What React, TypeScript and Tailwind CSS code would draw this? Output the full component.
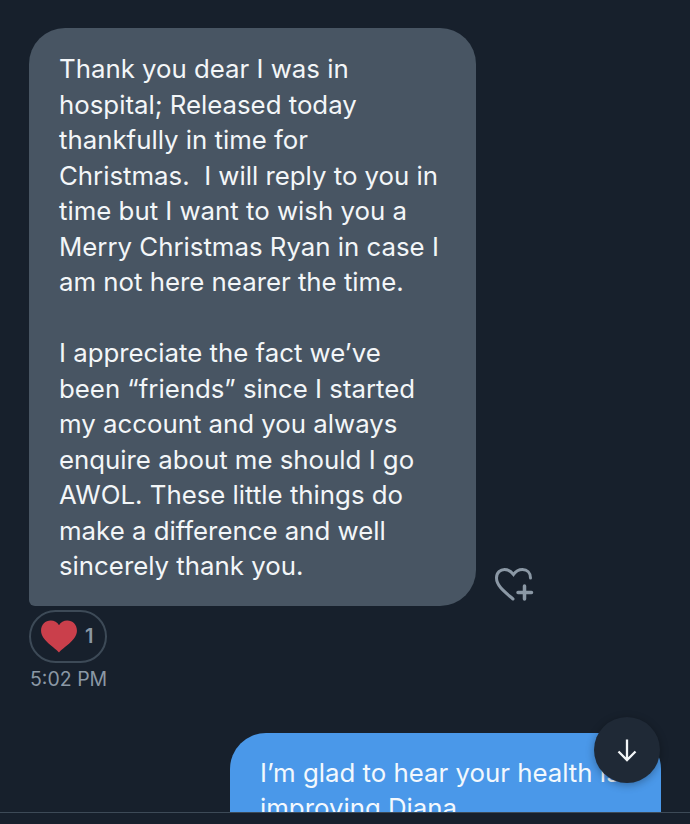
const lines = [
    'Thank you dear I was in',
    'hospital; Released today',
    'thankfully in time for',
    'Christmas.\u00a0 I will reply to you in',
    'time but I want to wish you a',
    'Merry Christmas Ryan in case I',
    'am not here nearer the time.',
    '\u00a0',
    'I appreciate the fact we’ve',
    'been “friends” since I started',
    'my account and you always',
    'enquire about me should I go',
    'AWOL. These little things do',
    'make a difference and well',
    'sincerely thank you.',
]

export default function App() {
    return (
        <div className="relative flex h-[824px] w-[690px] flex-col overflow-hidden bg-[#17202c] font-['Inter',sans-serif]">
            <div className="min-h-0 flex-1 overflow-hidden pt-7">
                {/* Incoming message */}
                <div className="flex items-end pl-[29px]">
                    <div className="w-[447px] rounded-[36px] rounded-bl-[6px] bg-[#485563] pl-[30px] pt-[23px] pb-[22px] text-[25.800px] leading-[35.5px] text-[#f3f6f8]">
                        {lines.map((line, i) => (
                            <div key={i} className="whitespace-nowrap">{line}</div>
                        ))}
                    </div>
                    <svg viewBox="0 0 40 36" className="mb-[4px] ml-[18px] h-[36px] w-[40px] fill-none stroke-[#8b98a5] stroke-[3px]">
                        <path d="M19 33 C11 26 2.500 20 2.500 12 C2.500 6.500 6.500 3.500 10.500 3.500 C14 3.500 17 5.500 19.500 8.500 C21.500 5.500 24.500 3.500 28.500 3.500 C33 3.500 36.500 6.500 36.500 12" strokeLinecap="round" />
                        <path d="M30.500 20 V33 M24 26.500 H37.500" strokeLinecap="round" strokeWidth="3.500" />
                    </svg>
                </div>

                {/* Reaction */}
                <div className="ml-[29px] mt-[4px] flex h-[53px] w-[78px] items-center rounded-full border-2 border-[#3d4a57] pl-[9px]">
                    <svg viewBox="0 0 38 34" className="h-[33px] w-[38px] fill-[#ca3f4b]">
                        <path d="M19 33.500 C16 29 0.500 21 0.500 11 C0.500 4.500 5 0.500 10.500 0.500 C14 0.500 17.500 2.500 19 5.500 C20.500 2.500 24 0.500 27.500 0.500 C33 0.500 37.500 4.500 37.500 11 C37.500 21 22 29 19 33.500 Z" />
                    </svg>
                    <span className="ml-[7px] text-[20px] font-semibold leading-none text-[#8b98a5]">1</span>
                </div>
                <div className="ml-[30px] mt-[4px] text-[19.500px] leading-[24px] text-[#8b98a5]">5:02 PM</div>

                {/* Outgoing message */}
                <div className="ml-[230px] mt-[42px] w-[431px] rounded-t-[36px] bg-[#4a98e9] pl-[30px] pt-[22px] text-[25.800px] leading-[35.5px] text-[#f3f8fd]">
                    <div className="whitespace-nowrap">I’m glad to hear your health is</div>
                    <div className="whitespace-nowrap">improving Diana</div>
                </div>
            </div>

            {/* Bottom bar */}
            <div className="h-[12px] shrink-0 border-t border-[#3d4a57] bg-[#17202c]" />

            {/* Scroll to bottom */}
            <button className="absolute left-[594px] top-[717px] flex h-[66px] w-[66px] items-center justify-center rounded-full bg-[#1f2936] shadow-[0_2px_8px_rgba(0,0,0,0.3)]">
                <svg viewBox="0 0 20 24" className="h-[24px] w-[20px] fill-none stroke-[#f3f6f8] stroke-[2.300px]">
                    <path d="M10 1.500 V22 M1.500 13.500 L10 22 L18.500 13.500" />
                </svg>
            </button>
        </div>
    )
}
